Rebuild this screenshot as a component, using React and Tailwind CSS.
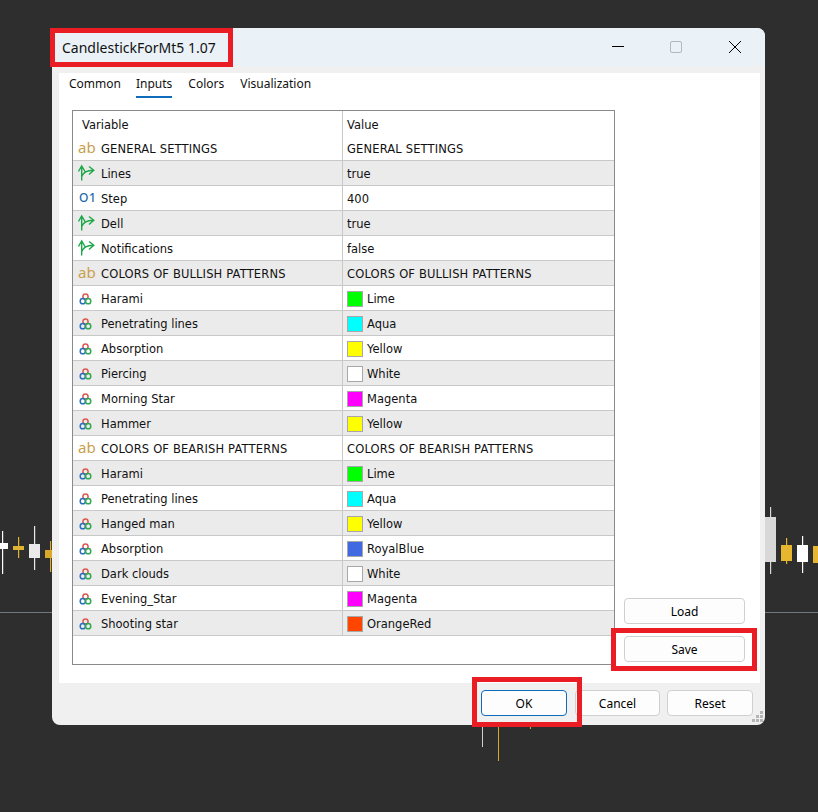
const rows = [
  ["ab", "GENERAL SETTINGS", "GENERAL SETTINGS"],
  ["tree", "Lines", "true"],
  ["num", "Step", "400"],
  ["tree", "Dell", "true"],
  ["tree", "Notifications", "false"],
  ["ab", "COLORS OF BULLISH PATTERNS", "COLORS OF BULLISH PATTERNS"],
  ["color", "Harami", "Lime", "bg-[#00ff00]"],
  ["color", "Penetrating lines", "Aqua", "bg-[#00ffff]"],
  ["color", "Absorption", "Yellow", "bg-[#ffff00]"],
  ["color", "Piercing", "White", "bg-white"],
  ["color", "Morning Star", "Magenta", "bg-[#ff00ff]"],
  ["color", "Hammer", "Yellow", "bg-[#ffff00]"],
  ["ab", "COLORS OF BEARISH PATTERNS", "COLORS OF BEARISH PATTERNS"],
  ["color", "Harami", "Lime", "bg-[#00ff00]"],
  ["color", "Penetrating lines", "Aqua", "bg-[#00ffff]"],
  ["color", "Hanged man", "Yellow", "bg-[#ffff00]"],
  ["color", "Absorption", "RoyalBlue", "bg-[#4169e1]"],
  ["color", "Dark clouds", "White", "bg-white"],
  ["color", "Evening_Star", "Magenta", "bg-[#ff00ff]"],
  ["color", "Shooting star", "OrangeRed", "bg-[#ff4500]"],
];

function Icon({ type }) {
  if (type === "ab")
    return <span className="w-[18px] font-['Noto_Sans',sans-serif] text-[15px] leading-none text-[#c9a04e] relative -top-[1px]">ab</span>;
  if (type === "num")
    return <span className="w-[18px] font-['Noto_Sans',sans-serif] text-[12px] leading-none font-medium tracking-[0.5px] text-[#1f6aa8] relative -top-[1px] pl-[1px]">O1</span>;
  if (type === "tree")
    return (
      <svg width="18" height="18" viewBox="0 0 18 18" fill="none" stroke="#1fa84a" strokeWidth="1.4" className="relative -top-[1px]">
        <path d="M0.5 7.5 L3.7 1.8 L7 7.5 M3.7 2 V16.5 M3.7 12.5 C5 8.5 9 6.4 15.5 6.2 M11 2.5 L15.8 6.2 L11 10.5" />
      </svg>
    );
  return (
    <svg width="18" height="14" viewBox="0 0 18 14" fill="none" strokeWidth="1.5">
      <circle cx="7.5" cy="4.5" r="2.6" stroke="#dd5a50" />
      <circle cx="4.8" cy="9.2" r="2.6" stroke="#2a6fc0" />
      <circle cx="10.2" cy="9.2" r="2.6" stroke="#2fa84f" />
    </svg>
  );
}

function Btn({ children, primary, className = "" }) {
  return (
    <button
      className={`h-[26px] rounded-[4px] border bg-[#fdfdfd] pt-[1px] text-[12px] text-black ${
        primary ? "border-[#0f6cbd]" : "border-[#d0d0d0]"
      } ${className}`}
    >
      {children}
    </button>
  );
}

function Chart() {
  const c = (x, y1, y2, bx, bw, by, bh, col) => (
    <g key={x + "-" + y1}>
      <rect x={x} y={y1} width="1.2" height={y2 - y1} fill={col} />
      <rect x={bx} y={by} width={bw} height={bh} fill={col} />
    </g>
  );
  return (
    <svg width="818" height="812" className="absolute left-0 top-0">
      <rect x="0" y="612" width="818" height="1" fill="#6f7780" />
      {c(2, 531, 574, 0, 8, 543, 6, "#ffffff")}
      {c(18, 537, 558, 13, 11, 546, 4, "#e0b330")}
      {c(34, 526, 570, 29, 11, 544, 14, "#eaeaea")}
      {c(50, 541, 572, 45, 8, 550, 8, "#d9a92c")}
      {c(770, 507, 574, 765, 11, 517, 45, "#d8d8d8")}
      {c(786, 538, 564, 781, 11, 545, 16, "#e6b72e")}
      {c(802, 536, 573, 797, 11, 545, 17, "#ffffff")}
      {c(818, 540, 570, 813, 5, 546, 17, "#e6b72e")}
      <rect x="482" y="725" width="1" height="22" fill="#d0d0d0" />
      <rect x="498" y="725" width="1" height="36" fill="#d9a92c" />
      <rect x="530" y="725" width="1" height="4" fill="#d9a92c" />
    </svg>
  );
}

export default function App() {
  return (
    <div className="relative w-[818px] h-[812px] overflow-hidden bg-[#2e2e2e] pl-[52px] pt-[28px] font-['Noto_Sans','Open_Sans',sans-serif]">
      <Chart />
      <div className="relative flex h-[697px] w-[713px] flex-col overflow-hidden rounded-[8px] bg-[#f0f0f0]">
        {/* Title bar */}
        <div className="flex h-[38px] items-center bg-[#eaf2f7] pl-[10px]">
          <span className="text-[14px] text-[#111]">CandlestickForMt5 1.07</span>
          <div className="ml-auto flex items-center">
            <svg width="12" height="12" viewBox="0 0 12 12" className="mr-[46px]">
              <rect x="0" y="5" width="12" height="1" fill="#000" />
            </svg>
            <svg width="12" height="12" viewBox="0 0 12 12" className="mr-[47px]" fill="none">
              <rect x="0.5" y="0.5" width="11" height="11" rx="1.5" stroke="#b4b8bb" />
            </svg>
            <svg width="12" height="12" viewBox="0 0 12 12" className="mr-[24px]" stroke="#000" strokeWidth="1">
              <path d="M0 0 L12 12 M12 0 L0 12" />
            </svg>
          </div>
        </div>

        {/* Panel */}
        <div className="mt-[7px] ml-[7px] mr-[5px] flex h-[610px] flex-col bg-white">
          <div className="flex h-[37px] items-start gap-[16px] pl-[10px] text-[12px] text-[#111]">
            <span className="-mr-[1px] mt-[2px]">Common</span>
            <span className="mt-[2px] h-[23px] border-b-[2.5px] border-[#0f6cbd]">Inputs</span>
            <span className="mt-[2px]">Colors</span>
            <span className="mt-[2px]">Visualization</span>
          </div>
          <div className="flex">
            {/* Table */}
            <div className="ml-[13px] h-[555px] w-[543px] border border-[#8a8a8a] font-['DejaVu_Sans',sans-serif] text-[11.5px] text-[#111]">
              <div className="flex h-[25px] items-center">
                <span className="w-[270px] border-r border-[#c8c8c8] pl-[9px] leading-[25px]"><span className="relative top-[2px]">Variable</span></span>
                <span className="relative top-[2px] pl-[4px]">Value</span>
              </div>
              {rows.map((r, i) => (
                <div
                  key={i}
                  className={`flex h-[25px] items-center border-b border-[#c8c8c8] ${
                    i % 2 ? "bg-[#ebebeb]" : "bg-white"
                  } ${r[0] === "ab" ? "tracking-[0.15px]" : ""}`}
                >
                  <div className="flex h-full w-[270px] items-center border-r border-[#c8c8c8] pl-[5px] pt-[1px]">
                    <div className="flex w-[23px] items-center">
                      <Icon type={r[0]} />
                    </div>
                    <span className="relative top-[1px]">{r[1]}</span>
                  </div>
                  <div className="flex items-center pl-[4px] pt-[1px]">
                    {r[3] && <span className={`mr-[4px] h-[16px] w-[16px] border border-[#a8a8a8] ${r[3]}`} />}
                    <span className="relative top-[1px]">{r[2]}</span>
                  </div>
                </div>
              ))}
            </div>
            {/* Side buttons */}
            <div className="ml-[9px] flex w-[121px] flex-col justify-end gap-[12px] pb-[3px]">
              <Btn>Load</Btn>
              <Btn>Save</Btn>
            </div>
          </div>
        </div>

        {/* Footer */}
        <div className="mt-[7px] flex justify-end gap-[7px] pr-[12px]">
          <Btn primary className="mr-[1px] w-[86px]">OK</Btn>
          <Btn className="w-[85px]">Cancel</Btn>
          <Btn className="w-[86px]">Reset</Btn>
        </div>

        {/* Resize grip */}
        <svg width="12" height="12" viewBox="0 0 12 12" className="absolute bottom-[2px] right-[1px]" fill="#b5b5b5">
          <rect x="8" y="0" width="3" height="3" />
          <rect x="4" y="4" width="3" height="3" />
          <rect x="8" y="4" width="3" height="3" />
          <rect x="0" y="8" width="3" height="3" />
          <rect x="4" y="8" width="3" height="3" />
          <rect x="8" y="8" width="3" height="3" />
        </svg>
      </div>

      {/* Red annotation boxes */}
      <div className="absolute left-[50px] top-[28px] h-[39px] w-[183px] border-[5px] border-[#ea1c24]" />
      <div className="absolute left-[611px] top-[628px] h-[43px] w-[146px] border-[5px] border-[#ea1c24]" />
      <div className="absolute left-[472px] top-[677px] h-[50px] w-[110px] border-[5px] border-[#ea1c24]" />
    </div>
  );
}
